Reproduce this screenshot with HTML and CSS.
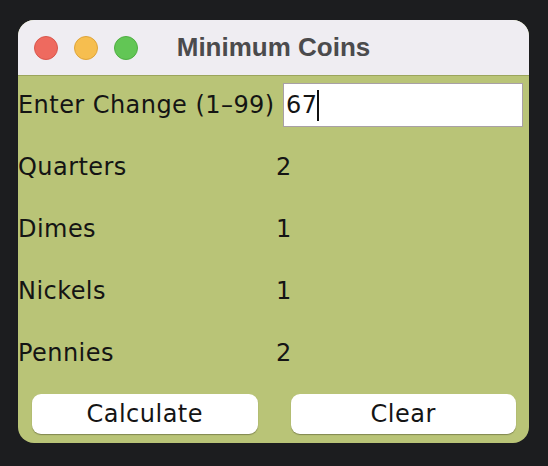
FILE: index.html
```html
<!DOCTYPE html>
<html>
<head>
<meta charset="utf-8">
<title>Minimum Coins</title>
<link rel="stylesheet" href="styles.css">
</head>
<body>
<div class="window">
  <div class="titlebar">
    <div class="lights">
      <span class="light red"></span>
      <span class="light yellow"></span>
      <span class="light green"></span>
    </div>
    <div class="title">Minimum Coins</div>
  </div>
  <div class="content">
    <div class="row first">
      <div class="label">Enter Change (1–99)</div>
      <div class="field"><span class="typed">67</span><span class="caret"></span></div>
    </div>
    <div class="row">
      <div class="label">Quarters</div>
      <div class="value">2</div>
    </div>
    <div class="row">
      <div class="label">Dimes</div>
      <div class="value">1</div>
    </div>
    <div class="row">
      <div class="label">Nickels</div>
      <div class="value">1</div>
    </div>
    <div class="row">
      <div class="label">Pennies</div>
      <div class="value">2</div>
    </div>
    <div class="buttons">
      <button class="btn">Calculate</button>
      <button class="btn">Clear</button>
    </div>
  </div>
</div>
</body>
</html>
```
FILE: styles.css
```css
html, body {
  margin: 0;
  padding: 0;
}
body {
  background: #1c1d1f;
  width: 548px;
  height: 466px;
  padding: 20px 0 0 18px;
  box-sizing: border-box;
  font-family: "DejaVu Sans", sans-serif;
  color: #141414;
}
.window {
  width: 511px;
  height: 423px;
  border-radius: 16px;
  overflow: hidden;
  background: #b9c477;
  display: flex;
  flex-direction: column;
}
.titlebar {
  height: 56px;
  background: #efedf2;
  border-bottom: 1px solid #9ba55c;
  box-sizing: border-box;
  display: flex;
  align-items: center;
  position: relative;
}
.lights {
  display: flex;
  gap: 16px;
  padding-left: 16px;
}
.light {
  width: 24px;
  height: 24px;
  border-radius: 50%;
  box-sizing: border-box;
}
.red { background: #ee6a5f; border: 1px solid #d8574d; }
.yellow { background: #f6be4f; border: 1px solid #dea43a; }
.green { background: #62c655; border: 1px solid #4fae43; }
.title {
  position: absolute;
  left: 0;
  right: 0;
  text-align: center;
  font-family: "Liberation Sans", Arial, sans-serif;
  font-weight: bold;
  font-size: 26px;
  color: #4b4b4d;
  top: 12px;
}
.content {
  flex: 1;
  display: flex;
  flex-direction: column;
}
.row {
  height: 62px;
  display: grid;
  grid-template-columns: 258px 1fr;
  align-items: center;
  font-size: 24px;
  letter-spacing: 0.45px;
}
.row.first {
  height: 60px;
  padding-bottom: 2px;
  box-sizing: border-box;
}
.label {
  white-space: nowrap;
}
.field {
  height: 44px;
  margin-left: 7px;
  margin-right: 6px;
  background: #ffffff;
  border: 1px solid #a8a0a6;
  box-sizing: border-box;
  display: flex;
  align-items: center;
  padding-left: 2px;
}
.caret {
  display: inline-block;
  width: 2px;
  height: 31px;
  background: #111;
  margin-left: 0;
}
.buttons {
  display: flex;
  gap: 33px;
  padding: 10px 13px 0 14px;
}
.btn {
  flex: 1;
  height: 40px;
  border: none;
  border-radius: 9px;
  background: #ffffff;
  box-shadow: 0 1px 1px rgba(60, 60, 30, 0.45);
  font-family: "DejaVu Sans", sans-serif;
  font-size: 24px;
  letter-spacing: 0.5px;
  color: #141414;
  padding: 0;
}
```
